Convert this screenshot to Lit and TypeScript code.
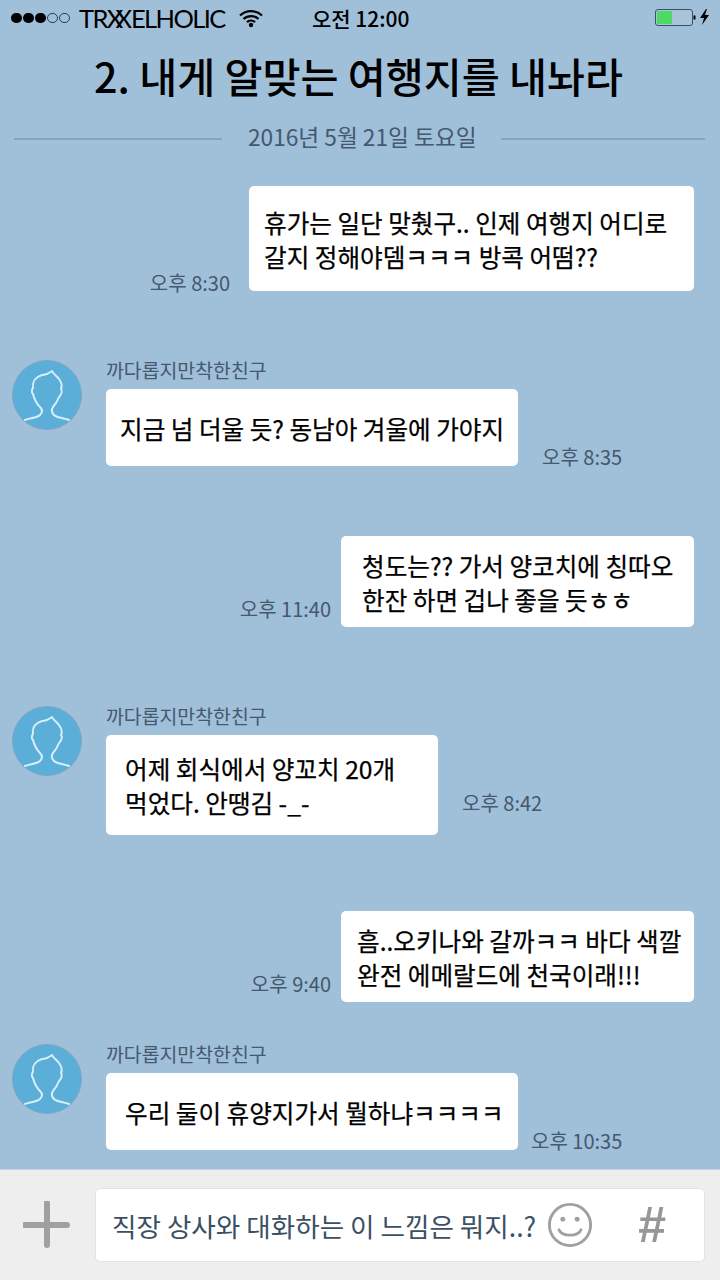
import { css, html, LitElement } from 'lit';
import { customElement } from 'lit/decorators.js';

interface Message {
  mine: boolean;
  top: number;
  width: number;
  height: number;
  padLeft: number;
  lines: string[];
  time: string;
  timeGap: number;
  timeDrop: number;
}

const FRIEND = '까다롭지만착한친구';

const MESSAGES: Message[] = [
  { mine: true, top: 34, width: 445, height: 105, padLeft: 15, lines: ['휴가는 일단 맞췄구.. 인제 여행지 어디로', '갈지 정해야뎀ㅋㅋㅋ 방콕 어떰??'], time: '오후 8:30', timeGap: 19, timeDrop: -1 },
  { mine: false, top: 69, width: 412, height: 77, padLeft: 14, lines: ['지금 넘 더울 듯? 동남아 겨울에 가야지'], time: '오후 8:35', timeGap: 24, timeDrop: 0 },
  { mine: true, top: 70, width: 353, height: 91, padLeft: 21, lines: ['청도는?? 가서 양코치에 칭따오', '한잔 하면 겁나 좋을 듯ㅎㅎ'], time: '오후 11:40', timeGap: 10, timeDrop: 9 },
  { mine: false, top: 79, width: 332, height: 100, padLeft: 19, lines: ['어제 회식에서 양꼬치 20개', '먹었다. 안땡김 -_-'], time: '오후 8:42', timeGap: 24, timeDrop: 23 },
  { mine: true, top: 76, width: 353, height: 91, padLeft: 16, lines: ['흠..오키나와 갈까ㅋㅋ 바다 색깔', '완전 에메랄드에 천국이래!!!'], time: '오후 9:40', timeGap: 10, timeDrop: 9 },
  { mine: false, top: 42, width: 412, height: 77, padLeft: 19, lines: ['우리 둘이 휴양지가서 뭘하냐ㅋㅋㅋㅋ'], time: '오후 10:35', timeGap: 13, timeDrop: 0 },
];

@customElement('app-root')
export class AppRoot extends LitElement {
  static styles = css`
    :host {
      display: block;
      width: 720px;
      height: 1280px;
      overflow: hidden;
      background: #a0bfd8;
      font-family: 'Noto Sans CJK KR', 'Noto Sans', sans-serif;
      color: #000;
    }
    .page {
      height: 1280px;
      display: flex;
      flex-direction: column;
    }
    .status {
      height: 36px;
      display: flex;
      align-items: center;
      padding: 0 8px 0 11px;
      flex: none;
    }
    .signal {
      display: flex;
      gap: 1.5px;
      width: 68px;
    }
    .dot {
      width: 10.5px;
      height: 10.5px;
      border-radius: 50%;
      background: #000;
      box-sizing: border-box;
    }
    .dot.off {
      background: none;
      border: 1px solid #2c3e50;
    }
    .logo {
      font-family: 'Lato', sans-serif;
      font-weight: 400;
      font-size: 25.5px;
      line-height: 36px;
      letter-spacing: -1.6px;
      width: 160px;
      white-space: nowrap;
    }
    .logo span {
      letter-spacing: -8px;
      margin-right: 7px;
    }
    .wifi {
      width: 24px;
      height: 20px;
    }
    .clock {
      margin-left: 49px;
      font-size: 21px;
      font-weight: 500;
      line-height: 36px;
    }
    .battery {
      margin-left: auto;
      display: flex;
      align-items: center;
    }
    .title {
      flex: none;
      margin: 14px 0 0;
      padding-right: 3px;
      height: 50px;
      line-height: 50px;
      font-size: 41.3px;
      font-weight: 500;
      text-align: center;
      white-space: nowrap;
    }
    .date {
      flex: none;
      margin-top: 20px;
      display: flex;
      align-items: center;
      padding: 0 15px 0 14px;
      height: 32px;
      font-size: 22.7px;
      color: #44586f;
      white-space: nowrap;
    }
    .date i {
      height: 2px;
      background: #86a3bf;
      margin-top: 5px;
    }
    .date i:first-child {
      flex: none;
      width: 208px;
      margin-right: 26px;
    }
    .date i:last-child {
      flex: 1;
      margin-left: 24px;
    }
    .chat {
      flex: 1;
      min-height: 0;
      padding: 0 26px 0 12px;
    }
    .row {
      display: flex;
      align-items: flex-start;
    }
    .row.mine {
      justify-content: flex-end;
    }
    .avatar {
      width: 70px;
      height: 70px;
      flex: none;
      margin-right: 24px;
    }
    .body {
      display: flex;
      flex-direction: column;
    }
    .name {
      font-size: 19.4px;
      line-height: 20px;
      height: 29px;
      color: #44586f;
      white-space: nowrap;
    }
    .line {
      display: flex;
      align-items: flex-end;
    }
    .bubble {
      background: #fff;
      border-radius: 5px;
      box-sizing: border-box;
      display: flex;
      flex-direction: column;
      justify-content: center;
      font-size: 24.6px;
      line-height: 34px;
      font-weight: 400;
      -webkit-text-stroke: 0.25px #000;
      white-space: nowrap;
      flex: none;
    }
    .time {
      font-size: 20px;
      line-height: 24px;
      color: #44586f;
      white-space: nowrap;
    }
    .composer {
      flex: none;
      height: 111px;
      background: #eeeeee;
      border-top: 1px solid #c4d4e4;
      box-sizing: border-box;
      display: flex;
      align-items: center;
      padding: 0 15px 0 23px;
    }
    .plus {
      width: 48px;
      height: 48px;
      margin-right: 24px;
      flex: none;
    }
    .input {
      flex: 1;
      height: 74px;
      background: #fff;
      border: 1px solid #e2e2e2;
      border-radius: 5px;
      box-sizing: border-box;
      display: flex;
      align-items: center;
      padding-left: 16px;
      font-size: 26.6px;
      color: #3a5064;
      white-space: nowrap;
    }
    .smile {
      width: 46px;
      height: 46px;
      margin-left: 11px;
      flex: none;
    }
    .hash {
      margin-left: 45px;
      font-family: 'Liberation Sans', sans-serif;
      font-size: 50px;
      line-height: 50px;
      font-weight: 700;
      color: #979797;
    }
  `;

  private _renderAvatar() {
    return html`<svg class="avatar" viewBox="0 0 70 70">
      <circle cx="35" cy="35" r="34.5" fill="#5aaed8" stroke="#7fa6c4" stroke-width="1" />
      <path d="M13 60C18 58 25 58 28 55C31 52 30 49 28 47C24 43 22 38 21 34C19 32 20 29 21 28C20 20 24 17 30 15C33 15 36 14 40 11C41 14 45 16 47 19C50 23 50 27 49 29C51 31 49 35 47 37C45 42 43 45 41 47C39 50 40 53 42 55C45 58 52 58 57 60"
        fill="none" stroke="#d7effa" stroke-width="2" stroke-linecap="round" stroke-linejoin="round" />
    </svg>`;
  }

  private _renderMessage(m: Message) {
    const bubble = html`<div class="bubble" style="width:${m.width}px;height:${m.height}px;padding-left:${m.padLeft}px">
      ${m.lines.map(l => html`<div>${l}</div>`)}
    </div>`;
    const time = html`<div class="time" style="${m.mine ? `margin-right:${m.timeGap}px` : `margin-left:${m.timeGap}px`};margin-bottom:${m.timeDrop - 3}px">${m.time}</div>`;
    if (m.mine) {
      return html`<div class="row mine" style="margin-top:${m.top}px"><div class="line">${time}${bubble}</div></div>`;
    }
    return html`<div class="row" style="margin-top:${m.top}px">
      ${this._renderAvatar()}
      <div class="body">
        <div class="name">${FRIEND}</div>
        <div class="line">${bubble}${time}</div>
      </div>
    </div>`;
  }

  render() {
    return html`<div class="page">
      <div class="status">
        <div class="signal">
          ${[1, 1, 1, 0, 0].map(on => html`<div class="dot ${on ? '' : 'off'}"></div>`)}
        </div>
        <div class="logo">TR<span>XX</span>ELHOLIC</div>
        <svg class="wifi" viewBox="0 0 24 20">
          <path d="M1 7.5a16 16 0 0 1 22 0M4.5 11a11 11 0 0 1 15 0M8 14.2a6 6 0 0 1 8 0" fill="none" stroke="#000" stroke-width="2.3" />
          <circle cx="12" cy="17" r="2.2" />
        </svg>
        <div class="clock">오전 12:00</div>
        <div class="battery">
          <svg width="58" height="20" viewBox="0 0 58 20">
            <rect x="1.5" y="1.5" width="37" height="16" rx="2.5" fill="#a9c4da" stroke="#38506a" />
            <rect x="3" y="3" width="15" height="13" fill="#4cd964" />
            <rect x="39.5" y="7.5" width="2" height="4" fill="#000" />
            <path d="M52 1l-6 9h4l-2 7 7-10h-4l2-6z" fill="#000" />
          </svg>
        </div>
      </div>
      <h1 class="title">2. 내게 알맞는 여행지를 내놔라</h1>
      <div class="date"><i></i><span>2016년 5월 21일 토요일</span><i></i></div>
      <div class="chat">${MESSAGES.map(m => this._renderMessage(m))}</div>
      <div class="composer">
        <svg class="plus" viewBox="0 0 48 48">
          <path d="M24 2v42M2 24h42" stroke="#a0a0a0" stroke-width="6" stroke-linecap="round" />
        </svg>
        <div class="input">
          <span>직장 상사와 대화하는 이 느낌은 뭐지..?</span>
          <svg class="smile" viewBox="0 0 48 48">
            <circle cx="24" cy="24" r="21.5" fill="none" stroke="#a0a0a0" stroke-width="3" />
            <circle cx="16.5" cy="18" r="2.6" fill="#a0a0a0" />
            <circle cx="31.5" cy="18" r="2.6" fill="#a0a0a0" />
            <path d="M12.5 29c3 7.5 20 7.5 23 0" fill="none" stroke="#a0a0a0" stroke-width="3" stroke-linecap="round" />
          </svg>
          <span class="hash">#</span>
        </div>
      </div>
    </div>`;
  }
}
